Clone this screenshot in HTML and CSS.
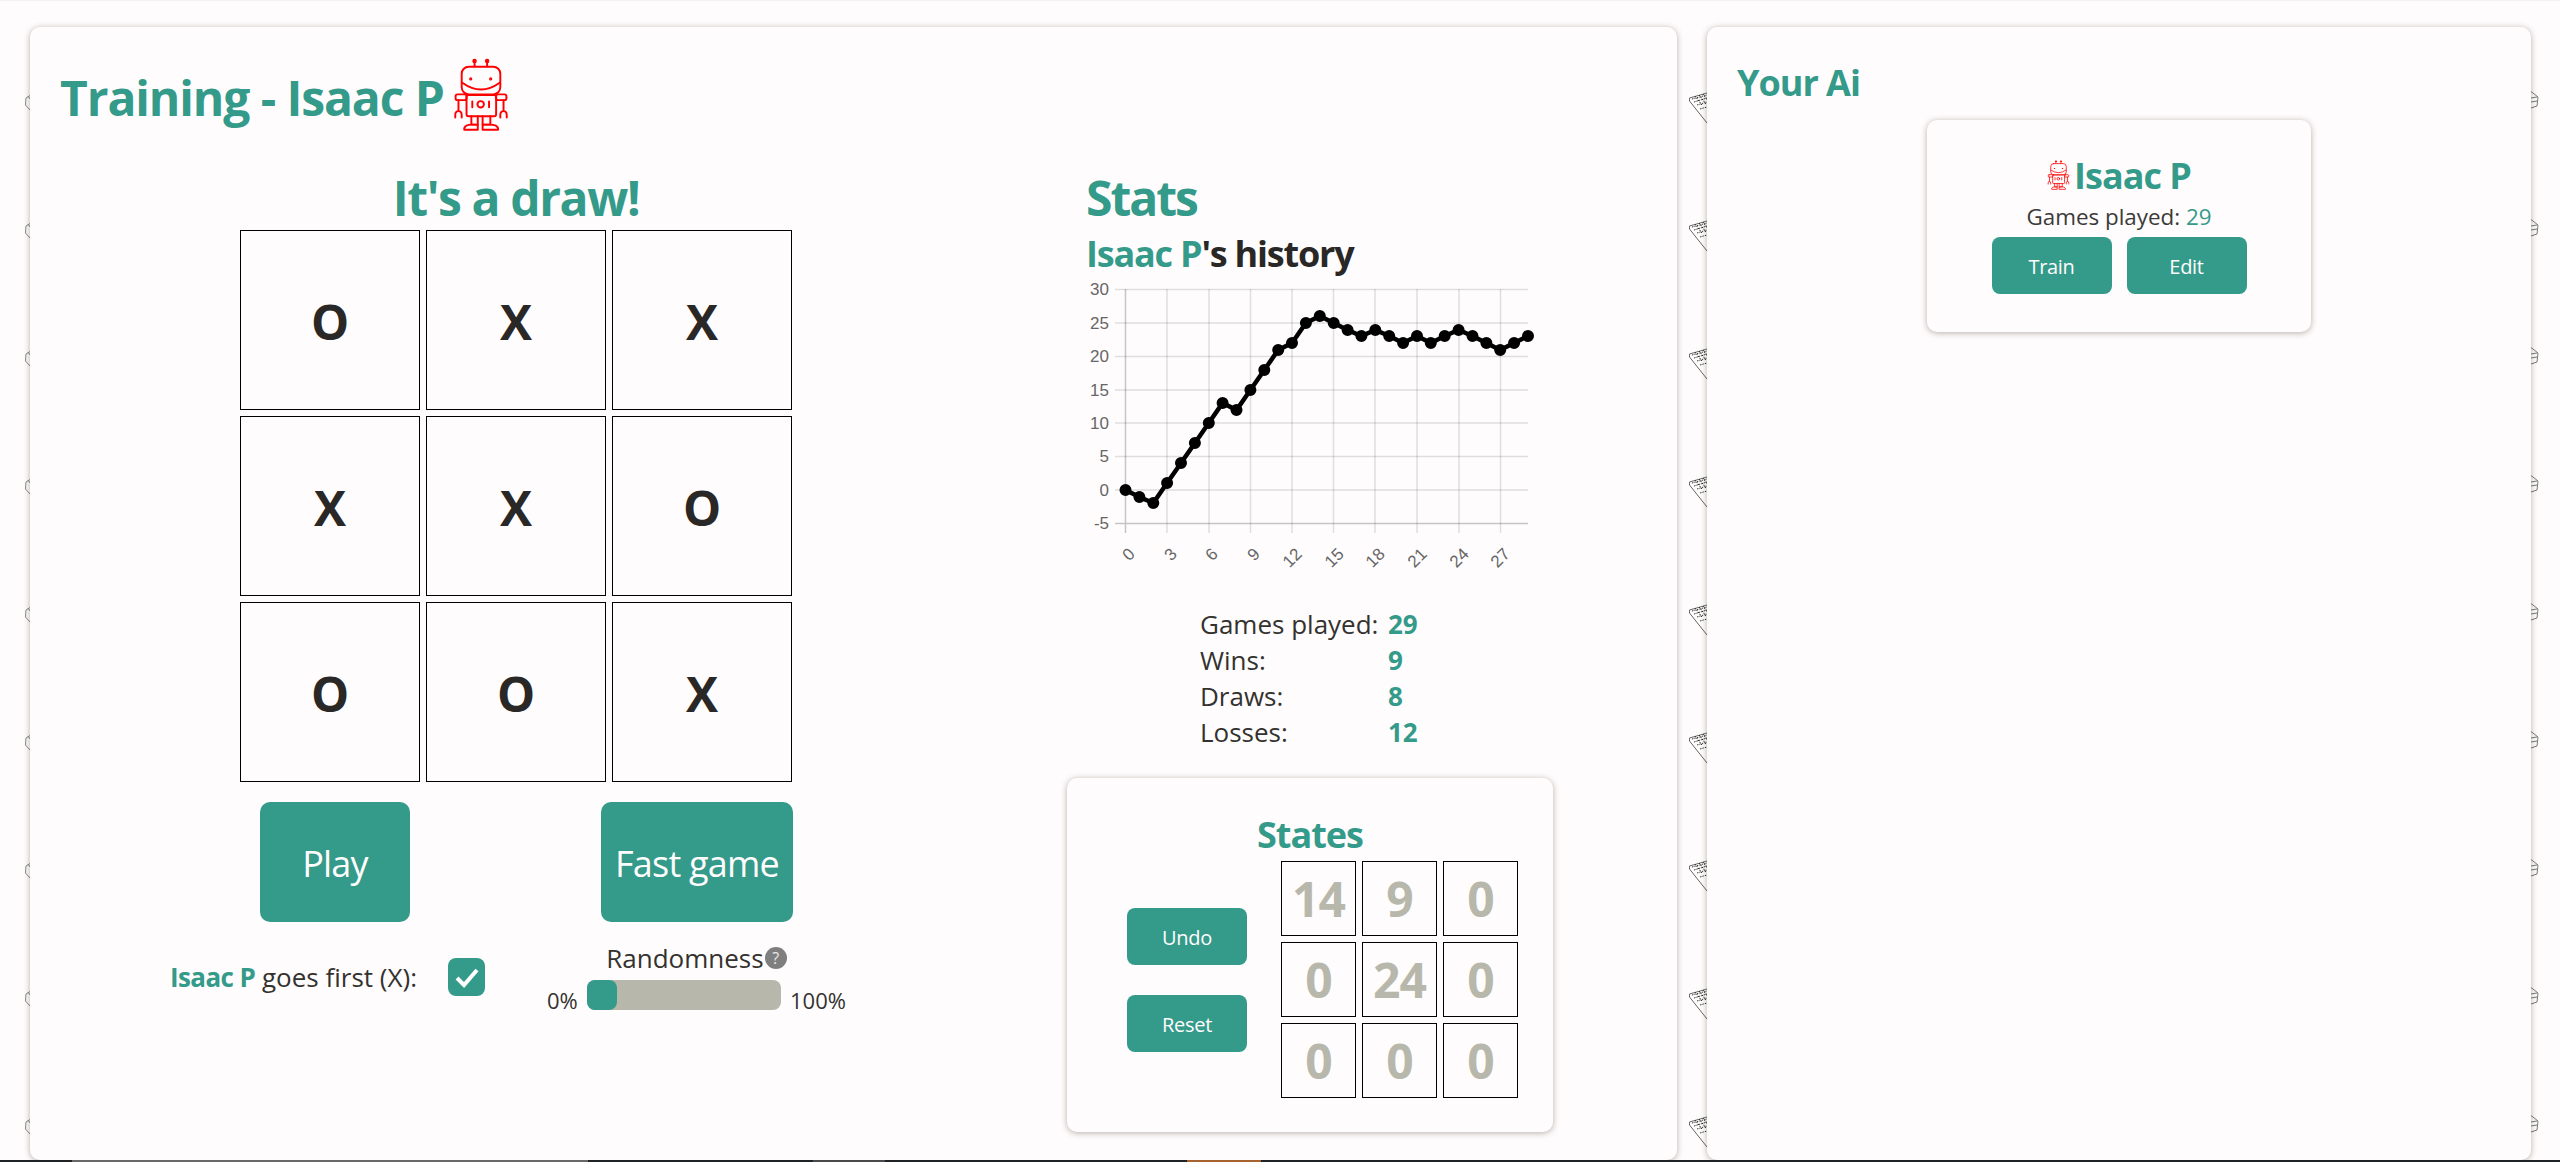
FILE: index.html
```html
<!DOCTYPE html>
<html lang="en">
<head>
  <meta charset="UTF-8">
  <meta name="viewport" content="width=device-width, initial-scale=1.0">
  <title>Training - Isaac P</title>
  <link rel="stylesheet" href="styles.css">
</head>
<body>
<!-- Robot avatar, reused in the title and the ai card -->
<svg class="defs" aria-hidden="true">
  <symbol id="robot" viewBox="98 48 174 232">
    <g fill="none" stroke="#f00" stroke-width="6" stroke-linecap="round" stroke-linejoin="round">
      <path d="M165 58v17M204 58v17"/>
      <circle cx="165" cy="58" r="4" fill="#f00"/>
      <circle cx="204" cy="58" r="4" fill="#f00"/>
      <rect x="125" y="76" width="120" height="86" rx="22"/>
      <path d="M127 126q58 42 116 0"/>
      <circle cx="153" cy="114" r="2" fill="#f00"/>
      <circle cx="215" cy="114" r="2" fill="#f00"/>
      <rect x="140" y="164" width="92" height="66" rx="6"/>
      <path d="M158 184v18M210 184v18"/>
      <circle cx="184" cy="193" r="10"/>
      <rect x="106" y="162" width="34" height="18" rx="6"/>
      <rect x="232" y="162" width="32" height="18" rx="6"/>
      <path d="M115 180v34M105 234v-8q0-12 10-12t10 12v8M255 180v34M245 234v-8q0-12 10-12t10 12v8"/>
      <path d="M155 230v26h20v-26M190 230v26h24v-26"/>
      <path d="M133 272v-5q4-11 22-11h20v16zM190 272v-16h24q20 0 24 11v5z"/>
    </g>
  </symbol>
</svg>

<div class="top-line"></div>

<main class="page">
  <section class="card train-card">
    <h1 class="page-title">Training - Isaac P <svg class="robot-lg"><use href="#robot"/></svg></h1>

    <div class="train-body">
      <!-- Game board -->
      <div class="game">
        <h2 class="big-title">It's a draw!</h2>
        <div class="board">
          <div class="cell">O</div>
          <div class="cell">X</div>
          <div class="cell">X</div>
          <div class="cell">X</div>
          <div class="cell">X</div>
          <div class="cell">O</div>
          <div class="cell">O</div>
          <div class="cell">O</div>
          <div class="cell">X</div>
        </div>

        <div class="game-buttons">
          <button class="btn btn-lg btn-play">Play</button>
          <button class="btn btn-lg btn-fast">Fast game</button>
        </div>

        <div class="game-options">
          <div class="first-option">
            <span><b class="green">Isaac P</b> goes first (X):</span>
            <span class="checkbox">
              <svg viewBox="0 0 24 24" width="24" height="24"><path d="M2 13l7 7L22 5" fill="none" stroke="#fff" stroke-width="4"/></svg>
            </span>
          </div>
          <div class="random-option">
            <div class="random-label">Randomness<span class="help">?</span></div>
            <div class="random-row">
              <span>0%</span>
              <div class="slider"><div class="slider-thumb"></div></div>
              <span class="random-max">100%</span>
            </div>
          </div>
        </div>
      </div>

      <!-- Stats -->
      <div class="stats">
        <div class="stats-top">
          <h2 class="big-title">Stats</h2>
          <h3 class="history-title"><span class="green">Isaac P</span>'s history</h3>
          <svg class="chart" width="480" height="290" viewBox="1080 280 480 290">
            <g stroke="#000" stroke-opacity=".12" stroke-width="1.5">
              <path d="M1115 289.5h413M1115 323h413M1115 356.5h413M1115 390h413M1115 423h413M1115 456.5h413M1115 490h413"/>
              <path d="M1167 289v244M1209 289v244M1250.5 289v244M1292 289v244M1333.5 289v244M1375 289v244M1417 289v244M1459 289v244M1500.5 289v244"/>
              <path d="M1115 523.5h413M1125.5 289v244" stroke-opacity=".22"/>
            </g>
            <g class="chart-y" text-anchor="end">
              <text x="1109" y="295">30</text>
              <text x="1109" y="329">25</text>
              <text x="1109" y="362">20</text>
              <text x="1109" y="396">15</text>
              <text x="1109" y="429">10</text>
              <text x="1109" y="462">5</text>
              <text x="1109" y="496">0</text>
              <text x="1109" y="529">-5</text>
            </g>
            <g class="chart-x" text-anchor="end">
              <text transform="translate(1136 555) rotate(-45)">0</text>
              <text transform="translate(1178 555) rotate(-45)">3</text>
              <text transform="translate(1219 555) rotate(-45)">6</text>
              <text transform="translate(1261 555) rotate(-45)">9</text>
              <text transform="translate(1303 555) rotate(-45)">12</text>
              <text transform="translate(1345 555) rotate(-45)">15</text>
              <text transform="translate(1386 555) rotate(-45)">18</text>
              <text transform="translate(1428 555) rotate(-45)">21</text>
              <text transform="translate(1470 555) rotate(-45)">24</text>
              <text transform="translate(1511 555) rotate(-45)">27</text>
            </g>
            <polyline fill="none" stroke="#000" stroke-width="4.5" points="1125.5,490 1139.4,497 1153.3,503 1167.1,483 1181,463 1194.9,443 1208.8,423 1222.6,403 1236.5,410 1250.4,390 1264.3,370 1278.2,350 1292,343 1305.9,323 1319.8,316 1333.7,323 1347.6,330 1361.4,336 1375.3,330 1389.2,336 1403.1,343 1417,336 1430.8,343 1444.7,336 1458.6,330 1472.5,336 1486.4,343 1500.2,350 1514.1,343 1528,336"/>
            <path class="chart-dots" d="M1125.5 490h0M1139.4 497h0M1153.3 503h0M1167.1 483h0M1181 463h0M1194.9 443h0M1208.8 423h0M1222.6 403h0M1236.5 410h0M1250.4 390h0M1264.3 370h0M1278.2 350h0M1292 343h0M1305.9 323h0M1319.8 316h0M1333.7 323h0M1347.6 330h0M1361.4 336h0M1375.3 330h0M1389.2 336h0M1403.1 343h0M1417 336h0M1430.8 343h0M1444.7 336h0M1458.6 330h0M1472.5 336h0M1486.4 343h0M1500.2 350h0M1514.1 343h0M1528 336h0"/>
          </svg>

          <dl class="totals">
            <dt>Games played:</dt><dd>29</dd>
            <dt>Wins:</dt><dd>9</dd>
            <dt>Draws:</dt><dd>8</dd>
            <dt>Losses:</dt><dd>12</dd>
          </dl>
        </div>

        <div class="card states-card">
          <h3 class="states-title">States</h3>
          <div class="states-body">
            <div class="states-buttons">
              <button class="btn">Undo</button>
              <button class="btn">Reset</button>
            </div>
            <div class="state-grid">
              <div class="state-cell">14</div>
              <div class="state-cell">9</div>
              <div class="state-cell">0</div>
              <div class="state-cell">0</div>
              <div class="state-cell">24</div>
              <div class="state-cell">0</div>
              <div class="state-cell">0</div>
              <div class="state-cell">0</div>
              <div class="state-cell">0</div>
            </div>
          </div>
        </div>
      </div>
    </div>
  </section>

  <section class="card ai-card">
    <h2 class="ai-title">Your Ai</h2>
    <div class="card ai-item">
      <h3 class="ai-name"><svg class="robot-sm"><use href="#robot"/></svg>Isaac P</h3>
      <p class="ai-games">Games played: <span class="green">29</span></p>
      <div class="ai-buttons">
        <button class="btn">Train</button>
        <button class="btn">Edit</button>
      </div>
    </div>
  </section>
</main>

<div class="taskbar">
  <div class="task task-1"></div>
  <div class="task task-2"></div>
  <div class="task task-3"></div>
</div>
</body>
</html>
```

FILE: styles.css
```css
* {
  box-sizing: border-box;
}
html, body {
  height: 100%;
}
body {
  margin: 0;
  overflow: hidden;
  position: relative;
  font-family: "Open Sans", "Noto Sans", sans-serif;
  color: #33322f;
  background-color: #fffcfd;
  background-image:
    url("data:image/svg+xml,%3Csvg xmlns='http://www.w3.org/2000/svg' width='10' height='128'%3E%3Cpath d='M5 .5L1 3 .5 10 5 15M3 1l2 3' fill='none' stroke='%23888' stroke-width='1'/%3E%3C/svg%3E"),
    url("data:image/svg+xml,%3Csvg xmlns='http://www.w3.org/2000/svg' width='18' height='128'%3E%3Cpath d='M.5 6L18 1M.5 6v3L18 31' fill='none' stroke='%23666' stroke-width='1'/%3E%3Cpath d='M3 7l15-4M5 10l13-4M8 13l10-3M11 17l7-2M6 4l7 9M10 3l7 9M14 2l4 6' fill='none' stroke='%23333' stroke-width='1' stroke-dasharray='1.5 1'/%3E%3C/svg%3E"),
    url("data:image/svg+xml,%3Csvg xmlns='http://www.w3.org/2000/svg' width='8' height='128'%3E%3Cpath d='M0 .5L7 6 6 15l-6 2M0 7l6-1M0 11l6-1' fill='none' stroke='%23777' stroke-width='1'/%3E%3C/svg%3E");
  background-repeat: repeat-y;
  background-position: 25px 95px, 1689px 92px, 2531px 91px;
}
.defs {
  display: none;
}
.green {
  color: #349a89;
}
.top-line {
  height: 1px;
  background: #f4f3f2;
}
.page {
  display: grid;
  grid-template-columns: 1647px 824px;
  column-gap: 30px;
  padding: 26px 0 0 30px;
}
.card {
  background: #fffcfd;
  border-radius: 10px;
  box-shadow: 0 1px 6px rgba(50, 50, 30, 0.38);
}
.train-card {
  height: 1133px;
  padding: 0 30px;
}
.page-title {
  display: flex;
  align-items: center;
  height: 120px;
  padding-top: 21px;
  margin: 0;
  font-size: 48px;
  font-weight: 700;
  letter-spacing: -1.1px;
  color: #349a89;
}
.robot-lg {
  width: 56px;
  height: 76px;
  margin: 0 0 6px 9px;
}
.train-body {
  display: grid;
  grid-template-columns: 912px 486px;
  column-gap: 95px;
}
.big-title {
  margin: 0 0 3px;
  height: 58px;
  line-height: 58px;
  font-size: 48px;
  font-weight: 700;
  letter-spacing: -1.4px;
  color: #349a89;
  text-align: center;
}

/* board */
.game {
  padding-top: 22px;
}
.board {
  display: grid;
  grid-template-columns: repeat(3, 180px);
  grid-auto-rows: 180px;
  gap: 6px;
  justify-content: center;
}
.cell {
  display: flex;
  align-items: center;
  justify-content: center;
  padding-top: 2px;
  border: 1px solid #000;
  font-size: 48px;
  font-weight: 700;
  color: #292826;
}
.game-buttons {
  display: flex;
  margin: 20px 0 0 200px;
}
.btn {
  display: block;
  width: 120px;
  height: 57px;
  padding: 2px 0 0;
  border: none;
  border-radius: 8px;
  background-color: #349a89;
  color: #fffcfd;
  font-family: inherit;
  font-size: 20px;
  letter-spacing: -0.3px;
}
.btn-lg {
  height: 120px;
  border-radius: 10px;
  font-size: 36px;
  letter-spacing: -0.8px;
}
.btn-play {
  width: 150px;
}
.btn-fast {
  width: 192px;
  margin-left: 191px;
}
.game-options {
  display: flex;
  font-size: 26px;
  line-height: 32px;
}
.first-option {
  display: flex;
  align-items: center;
  gap: 31px;
  flex: none;
  width: 377px;
  margin: 36px 0 0 110px;
  height: 38px;
  white-space: nowrap;
}
.first-option b {
  font-weight: 700;
  letter-spacing: -0.6px;
}
.checkbox {
  display: flex;
  align-items: center;
  justify-content: center;
  flex: none;
  width: 37px;
  height: 38px;
  border-radius: 8px;
  background: #349a89;
}
.random-option {
  margin-top: 20px;
}
.random-label {
  display: flex;
  align-items: center;
  justify-content: center;
  gap: 1px;
}
.help {
  width: 22px;
  height: 22px;
  border-radius: 50%;
  background: #7f7f7f;
  color: #e8e8e8;
  font-size: 16px;
  line-height: 22px;
  text-align: center;
}
.random-row {
  display: grid;
  grid-template-columns: 40px 194px auto;
  align-items: start;
  margin-top: 6px;
  font-size: 22px;
}
.random-row span {
  margin-top: 5px;
  line-height: 30px;
}
.random-max {
  padding-left: 9px;
}
.slider {
  height: 30px;
  border-radius: 8px;
  background: #b7b8ab;
}
.slider-thumb {
  width: 30px;
  height: 30px;
  border-radius: 8px;
  background: #349a89;
}

/* stats */
.stats {
  padding-top: 22px;
}
.stats-top {
  padding-left: 19px;
}
.stats .big-title {
  text-align: left;
  letter-spacing: -2px;
}
.history-title {
  margin: 0;
  font-size: 36px;
  line-height: 48px;
  font-weight: 700;
  letter-spacing: -1.2px;
  color: #292826;
}
.chart {
  display: block;
  margin: 2px 0 0 -6px;
}
.chart text {
  font-family: "Liberation Sans", Arial, sans-serif;
  font-size: 17px;
  fill: #666;
}
.chart-dots {
  fill: none;
  stroke: #000;
  stroke-width: 12;
  stroke-linecap: round;
}
.totals {
  display: grid;
  grid-template-columns: 188px auto;
  justify-content: start;
  margin: 36px 0 0 114px;
  font-size: 26px;
  line-height: 36px;
}
.totals dd {
  margin: 0;
  font-weight: 700;
  color: #349a89;
}
.states-card {
  margin-top: 28px;
  height: 354px;
  padding-top: 33px;
}
.states-title {
  margin: 0;
  height: 48px;
  line-height: 48px;
  font-size: 36px;
  font-weight: 700;
  letter-spacing: -1px;
  color: #349a89;
  text-align: center;
}
.states-body {
  display: flex;
  align-items: center;
  padding-left: 60px;
  margin-top: 2px;
}
.states-buttons {
  display: flex;
  flex-direction: column;
  gap: 30px;
}
.state-grid {
  display: grid;
  grid-template-columns: repeat(3, 75px);
  grid-auto-rows: 75px;
  gap: 6px;
  margin-left: 34px;
}
.state-cell {
  display: flex;
  align-items: center;
  justify-content: center;
  border: 1px solid #000;
  font-size: 48px;
  font-weight: 700;
  letter-spacing: -1px;
  color: #b7b8ab;
}

/* ai list */
.ai-card {
  height: 1133px;
  padding: 0 30px;
}
.ai-title {
  margin: 0;
  height: 93px;
  padding-top: 32px;
  line-height: 48px;
  font-size: 36px;
  font-weight: 700;
  letter-spacing: -1px;
  color: #349a89;
}
.ai-item {
  width: 384px;
  height: 212px;
  margin-left: 190px;
  padding-top: 32px;
  text-align: center;
}
.ai-name {
  display: flex;
  align-items: center;
  justify-content: center;
  margin: 0;
  height: 46px;
  font-size: 36px;
  font-weight: 700;
  letter-spacing: -1px;
  color: #349a89;
}
.robot-sm {
  width: 23px;
  height: 30px;
  margin-right: 4px;
}
.ai-games {
  margin: 0;
  font-size: 22.4px;
  line-height: 38px;
  color: #3b3a38;
}
.ai-buttons {
  display: flex;
  justify-content: center;
  gap: 15px;
  margin-top: 1px;
}

.taskbar {
  position: absolute;
  left: 0;
  right: 0;
  bottom: 0;
  display: flex;
  height: 2px;
  background: #1f2326;
}
.task {
  height: 2px;
}
.task-1 {
  width: 516px;
  margin-left: 72px;
  background: #686868;
}
.task-2 {
  width: 72px;
  margin-left: 225px;
  background: #4a4a4a;
}
.task-3 {
  width: 74px;
  margin-left: 302px;
  background: #a8622f;
}
```
